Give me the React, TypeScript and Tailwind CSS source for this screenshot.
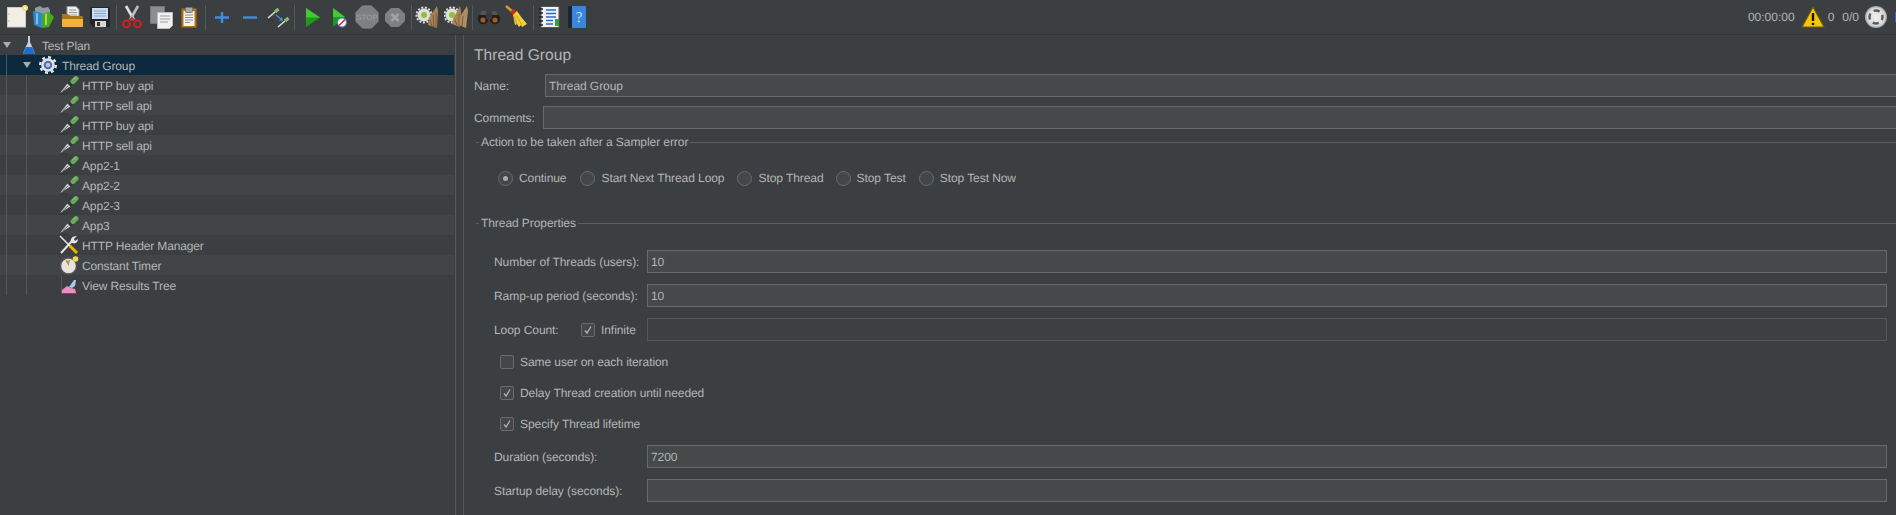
import React from "react";

const font = "font-['Liberation_Sans',Arial,sans-serif] [text-rendering:geometricPrecision]";

const S = ({ children, w = 24, h = 24 }: { children: React.ReactNode; w?: number; h?: number }) => (
  <svg width={w} height={h} viewBox={`0 0 ${w} ${h}`} className="block shrink-0">{children}</svg>
);

const NewI = () => (
  <S>
    <rect x="3.5" y="2.500" width="18" height="19.500" fill="#f1efe6" stroke="#cfcdc2" />
    <circle cx="5" cy="9" r=".7" fill="#999" />
    <circle cx="5" cy="16" r=".7" fill="#999" />
    <circle cx="21" cy="3" r="3" fill="#f3dd70" />
    <circle cx="21" cy="3" r="1.400" fill="#fff9d8" />
  </S>
);
const Templates = () => (
  <S>
    <path d="M4 3l5-2 3 2 5-1 2 3v8H4z" fill="#8f9ca3" />
    <path d="M2 6l9 2v15l-8-3z" fill="#2f87c8" />
    <path d="M5 8l2 .5v11L5 19z" fill="#7cc0ea" />
    <path d="M11 9l7-2 5 5-5 10-7 1z" fill="#48a81e" />
    <path d="M14 9l2-.5v11l-2 1z" fill="#a2d868" />
  </S>
);
const OpenI = () => (
  <S>
    <path d="M7 1.500h9l3 3v8H7z" fill="#eee" stroke="#9a9a9a" />
    <path d="M9 5h7M9 7.500h8M9 10h8" stroke="#999" />
    <path d="M2 9h6l2 2h12a1 1 0 011 1v9a1 1 0 01-1 1H3a1 1 0 01-1-1z" fill="#a97518" />
    <path d="M2 14h21v7a1 1 0 01-1 1H3a1 1 0 01-1-1z" fill="#efb23b" />
  </S>
);
const Save = () => (
  <S>
    <path d="M3 2h18a1 1 0 011 1v19H5l-3-3V3a1 1 0 011-1z" fill="#232528" />
    <rect x="4" y="3" width="16" height="11" fill="#c9ddf2" />
    <path d="M6 6h12M6 8.500h12M6 11h12" stroke="#86a5c9" />
    <rect x="7" y="16" width="11" height="6" fill="#d6d6d6" />
    <rect x="9" y="17" width="3" height="4" fill="#333" />
  </S>
);
const Cut = () => (
  <S>
    <path d="M6 1l8 14" stroke="#e0e0e0" strokeWidth="2.600" />
    <path d="M18 1L10 15" stroke="#bdbdbd" strokeWidth="2.600" />
    <circle cx="6.500" cy="19" r="3.400" fill="none" stroke="#d21f1f" strokeWidth="2" />
    <circle cx="17.500" cy="19" r="3.400" fill="none" stroke="#d21f1f" strokeWidth="2" />
    <path d="M9 16l3-3 3 3" stroke="#b81818" strokeWidth="1.600" fill="none" />
  </S>
);
const Copy = () => (
  <S>
    <rect x="1.500" y="1.500" width="14" height="17" fill="#8d8d8d" stroke="#777" />
    <path d="M8.500 7.500h15v13l-3 3h-12z" fill="#f1f1f1" stroke="#bdbdbd" />
    <path d="M11 11h10M11 14h10M11 17h8" stroke="#9c9c9c" />
  </S>
);
const Paste = () => (
  <S>
    <rect x="4.500" y="3.500" width="15" height="19" rx="1" fill="#b26f16" stroke="#8a5510" />
    <rect x="6.500" y="6" width="11" height="15" fill="#f3f3f3" />
    <rect x="8.500" y="2.500" width="7" height="5" rx="1" fill="#aaa" stroke="#777" />
    <path d="M8 10h8M8 12.500h8M8 15h8M8 17.500h5" stroke="#8d8d8d" />
  </S>
);
const Plus = () => <S><path d="M12 7v11M5 12.500h14" stroke="#3f8fdc" strokeWidth="2.400" /></S>;
const Minus = () => <S><path d="M5 12.500h14" stroke="#3f8fdc" strokeWidth="2.400" /></S>;
const Toggle = () => (
  <S>
    <path d="M2 13l7-6" stroke="#ddd" strokeWidth="1.600" />
    <path d="M9 7l3.500-3" stroke="#86c06a" strokeWidth="3.200" />
    <path d="M2 15h6" stroke="#222" strokeWidth="1" opacity=".6" />
    <path d="M10 10l5 4" stroke="#3f8fdc" strokeWidth="1.500" />
    <path d="M13 15.500l4 .5-1-4z" fill="#3f8fdc" />
    <path d="M12 22l7-6" stroke="#ddd" strokeWidth="1.600" />
    <path d="M19 16l3.500-3" stroke="#86c06a" strokeWidth="3.200" />
  </S>
);
const Play = () => (
  <S>
    <path d="M6 3l14 9.500L6 22z" fill="#1c9a1c" />
    <path d="M6 3l14 9.500H6z" fill="#45c835" />
  </S>
);
const PlayNo = () => (
  <S>
    <path d="M6 3l12 9L6 22z" fill="#1c9a1c" />
    <path d="M6 3l12 9H6z" fill="#45c835" />
    <circle cx="15" cy="17.500" r="4.500" fill="#eef3fb" stroke="#3f7fd0" />
    <path d="M12 20.500l6-6" stroke="#d22" strokeWidth="1.500" />
  </S>
);
const Stop = () => (
  <S>
    <path d="M7.500 1h9L23 7.500v9L16.500 23h-9L1 16.500v-9z" fill="#7d7f81" stroke="#8a8c8e" />
    <text x="12" y="15" textAnchor="middle" fontSize="8" fontWeight="700" fill="#969899" fontFamily="Liberation Sans">STOP</text>
  </S>
);
const Shutdown = () => (
  <S>
    <path d="M8 3h8l6 6v7l-6 6H8l-6-6V9z" fill="#7e8082" />
    <path d="M8.500 9l7 7M15.500 9l-7 7" stroke="#a0a2a4" strokeWidth="2.600" />
  </S>
);
const SmallGear = ({ x, y }: { x: number; y: number }) => (
  <g>
    <circle cx={x} cy={y} r="7.500" fill="none" stroke="#dededa" strokeWidth="2" strokeDasharray="2 1.600" />
    <circle cx={x} cy={y} r="6.500" fill="#dededa" />
    <circle cx={x} cy={y} r="3" fill="#8fc23a" />
  </g>
);
const Clear = () => (
  <S>
    <SmallGear x={9} y={10} />
    <path d="M14 13L22 1l1 5-1 17-9-3z" fill="#a9835a" />
    <path d="M15 15l2 6M18 10l1 12M21 7v15" stroke="#7a5c3c" />
  </S>
);
const ClearAll = () => (
  <S>
    <SmallGear x={8} y={10} />
    <path d="M9 14L16 1l1 6-1 15-8-3z" fill="#a9835a" />
    <path d="M15 13L23 1l1 5-2 17-7-3z" fill="#b08c62" />
    <path d="M11 15l2 5M15 9v12M19 11l-1 10" stroke="#7a5c3c" />
  </S>
);
const Binoc = () => (
  <S>
    <circle cx="6" cy="14" r="5.200" fill="#1f1f1f" />
    <circle cx="18" cy="14" r="5.200" fill="#1f1f1f" />
    <rect x="9" y="9" width="6" height="5" fill="#3a3a3a" />
    <path d="M3 10l2-4h4v4zM21 10l-2-4h-4v4z" fill="#555" />
    <circle cx="6" cy="15" r="2.600" fill="#a8581f" />
    <circle cx="18" cy="15" r="2.600" fill="#a8581f" />
  </S>
);
const Broom = () => (
  <S>
    <path d="M2 1l7 6" stroke="#c79a2e" strokeWidth="2.600" />
    <path d="M6 7l4-3 3 3-3 4z" fill="#cf2a1e" />
    <path d="M9 10l4-4c3 5 7 9 10 13l-5 3-1-2-2 2-2-3-2 1z" fill="#f2cf3b" />
    <path d="M12 10l6 10M10 11l3 8" stroke="#c9a21f" />
  </S>
);
const ListI = () => (
  <S>
    <rect x="4" y="1.500" width="18" height="21" fill="#f2f2f2" stroke="#555" />
    <path d="M9 5h10M9 8.500h10M9 12h10M9 15.500h7M9 19h7" stroke="#1f6fd6" strokeWidth="1.500" />
    <path d="M2 4h4M2 8h4M2 12h4M2 16h4M2 20h4" stroke="#222" strokeWidth="1.500" />
    <rect x="18" y="14" width="4" height="7" fill="#3aa13a" />
  </S>
);
const Help = () => (
  <S>
    <rect x="3" y="1" width="18" height="22" rx="1" fill="#3a86dd" />
    <rect x="3" y="1" width="4" height="22" fill="#1c2533" />
    <text x="14" y="17" textAnchor="middle" fontSize="15" fill="#cfe4fb" fontFamily="Liberation Serif">?</text>
  </S>
);
const Warn = () => (
  <S>
    <path d="M12 2L23 22H1z" fill="#f4c700" stroke="#6b5a10" strokeWidth="1.200" />
    <path d="M12 8v8" stroke="#111" strokeWidth="2.400" />
    <circle cx="12" cy="19" r="1.300" fill="#111" />
  </S>
);
const Loggers = () => (
  <S>
    <defs>
      <radialGradient id="lg">
        <stop offset="0" stopColor="#f0f0f0" />
        <stop offset=".8" stopColor="#d8d8d8" />
        <stop offset="1" stopColor="#9a9a9a" />
      </radialGradient>
    </defs>
    <circle cx="12" cy="12" r="11" fill="url(#lg)" />
    <circle cx="12" cy="12" r="6.500" fill="none" stroke="#5a5a5a" strokeWidth="2.400" strokeDasharray="6.200 4" strokeDashoffset="3.100" />
  </S>
);

const Flask = () => (
  <S w={12} h={20}>
    <path d="M5 1h2v6l4.500 10c.5 1 0 2-1 2h-9c-1 0-1.500-1-1-2L5 7z" fill="#ccd0d6" />
    <path d="M3 12h6l2.500 5c.5 1 0 2-1 2h-9c-1 0-1.500-1-1-2z" fill="#1e6fd0" />
  </S>
);
const TreeGear = () => (
  <S w={18} h={18}>
    <circle cx="9" cy="9" r="7.800" fill="none" stroke="#e6e6e6" strokeWidth="2.400" strokeDasharray="3 3.100" />
    <circle cx="9" cy="9" r="6.800" fill="#e6e6e6" />
    <circle cx="9" cy="9" r="4.300" fill="#4f6db3" />
    <circle cx="9" cy="9" r="2.300" fill="#b7c4e4" />
  </S>
);
const Dropper = () => (
  <S w={20} h={20}>
    <g transform="translate(0 .6)">
      <path d="M1 18.500h8" stroke="#222" strokeWidth="1" opacity=".55" />
      <path d="M1 17.500L8.500 8l3 3z" fill="#cfd2d0" />
      <path d="M3.500 15.500l6-5.500" stroke="#6a6d6f" strokeWidth="1" />
      <path d="M10.500 9.500L13 7" stroke="#303335" strokeWidth="4.500" />
      <path d="M14 6l3-3" stroke="#69aa5a" strokeWidth="5" strokeLinecap="round" />
      <path d="M14.500 4l2.500-2.500" stroke="#a4d48f" strokeWidth="1" />
    </g>
  </S>
);
const Tools = () => (
  <S w={20} h={20}>
    <path d="M1 1l11 11" stroke="#e5e5e5" strokeWidth="1.500" />
    <path d="M11 11l7 7" stroke="#f0b400" strokeWidth="3" />
    <path d="M2 18L13 6" stroke="#e5e5e5" strokeWidth="2" />
    <path d="M12 7c-1-3 1-6 6-6l-3 3 1 2 3-2c0 4-4 6-7 3z" fill="#e5e5e5" />
  </S>
);
const Timer = () => (
  <S w={20} h={20}>
    <circle cx="9.500" cy="11" r="8" fill="#e9e4d8" stroke="#57535f" strokeWidth="1.500" />
    <path d="M9.500 11L6 5l2 .5L11 5z" fill="#b59a4a" />
    <circle cx="16.500" cy="4" r="2.800" fill="#f1d94a" />
  </S>
);
const Results = () => (
  <S w={20} h={20}>
    <path d="M2.500 1v17.500H18" fill="none" stroke="#55585a" strokeWidth="1" />
    <path d="M3 18v-3l5-4 4 2 4 1 1 4z" fill="#ee8fc4" />
    <path d="M10 12l5-7h2l-1 6-3 2z" fill="#a9c9ee" />
  </S>
);

const tools: [string, React.FC | null][] = [
  ["ml-0", NewI], ["ml-[3px]", Templates], ["ml-[5px]", OpenI], ["ml-1", Save], ["ml-1", null],
  ["ml-[3px]", Cut], ["ml-[5px]", Copy], ["ml-1", Paste], ["ml-1", null],
  ["ml-1", Plus], ["ml-1", Minus], ["ml-1", Toggle], ["ml-1", null],
  ["ml-[5px]", Play], ["ml-[3px]", PlayNo], ["ml-1", Stop], ["ml-1", Shutdown], ["ml-1", null],
  ["ml-[3px]", Clear], ["ml-[5px]", ClearAll], ["ml-1", null],
  ["ml-1", Binoc], ["ml-[3px]", Broom], ["ml-[5px]", null],
  ["ml-[3px]", ListI], ["ml-1", Help],
];

const Toolbar = () => (
  <div className="flex h-[35px] shrink-0 items-center border-b border-[#323537] pl-1 text-[12px] text-[#b4b6b8]">
    {tools.map(([m, I], i) =>
      I ? (
        <div key={i} className={m}><I /></div>
      ) : (
        <div key={i} className={`${m} h-[25px] w-px bg-[#55585a]`} />
      )
    )}
    <span className="ml-auto">00:00:00</span>
    <div className="ml-[6px]"><Warn /></div>
    <span className="ml-[3px]">0</span>
    <span className="ml-[8px]">0/0</span>
    <div className="ml-[5px]"><Loggers /></div>
    <span className="ml-[7px] h-[10px] w-px bg-[#3a66c8]" />
  </div>
);

type Row = { label: string; icon: React.FC };
const children: Row[] = [
  { label: "HTTP buy api", icon: Dropper },
  { label: "HTTP sell api", icon: Dropper },
  { label: "HTTP buy api", icon: Dropper },
  { label: "HTTP sell api", icon: Dropper },
  { label: "App2-1", icon: Dropper },
  { label: "App2-2", icon: Dropper },
  { label: "App2-3", icon: Dropper },
  { label: "App3", icon: Dropper },
  { label: "HTTP Header Manager", icon: Tools },
  { label: "Constant Timer", icon: Timer },
  { label: "View Results Tree", icon: Results },
];

const Arrow = () => <span className="block h-0 w-0 border-x-[4px] border-t-[6px] border-x-transparent border-t-[#a9abad]" />;

const Tree = () => (
  <div className="w-[456px] shrink-0 border-r border-[#55585a] text-[12px] tracking-[-0.15px] text-[#b4b6b8]">
    <div className="flex h-5 w-[454px] items-center">
      <span className="ml-[3px]"><Arrow /></span>
      <span className="ml-[12px]"><Flask /></span>
      <span className="ml-[7px] pt-[2px]">Test Plan</span>
    </div>
    <div className="flex h-5 w-[454px] items-center bg-[#0d293e]">
      <span className="ml-[6px] h-full w-px bg-[#55585a]" />
      <span className="ml-[16px]"><Arrow /></span>
      <span className="ml-[8px]"><TreeGear /></span>
      <span className="ml-[5px] pt-[2px]">Thread Group</span>
    </div>
    {children.map((r, i) => (
      <div key={i} className={`flex h-5 w-[454px] items-center ${i % 2 ? "bg-[#424548]" : ""}`}>
        <span className="ml-[6px] h-full w-px bg-[#55585a]" />
        <span className="ml-[19px] h-full w-px bg-[#55585a]" />
        <span className="ml-[32px]"><r.icon /></span>
        <span className="ml-[3px] pt-[2px]">{r.label}</span>
      </div>
    ))}
  </div>
);

const Input = ({ value, className = "", dim }: { value?: string; className?: string; dim?: boolean }) => (
  <div className={`flex h-[23px] min-w-0 flex-1 items-center border px-[3px] ${dim ? "border-[#55585a] bg-[#3e4143]" : "border-[#686b6d] bg-[#45494a]"} ${className}`}>
    {value}
  </div>
);

const Legend = ({ title, className }: { title: string; className: string }) => (
  <div className={`flex h-4 items-center ${className}`}>
    <span className="ml-[2px] h-px w-[3px] bg-[#5c5f61]" />
    <span className="mx-[2px]">{title}</span>
    <span className="h-px flex-1 bg-[#5c5f61]" />
  </div>
);

const Radio = ({ label, on, className = "" }: { label: string; on?: boolean; className?: string }) => (
  <div className={`flex items-center ${className}`}>
    <span className="flex h-[15px] w-[15px] items-center justify-center rounded-full border border-[#696c6e] bg-[#43474a]">
      {on && <span className="h-[5px] w-[5px] rounded-full bg-[#a9abad]" />}
    </span>
    <span className="ml-[6px]">{label}</span>
  </div>
);

const Check = ({ on }: { on?: boolean }) => (
  <span className="flex h-[14px] w-[14px] shrink-0 items-center justify-center rounded-[2px] border border-[#696c6e] bg-[#43474a]">
    {on && (
      <svg width="10" height="10" viewBox="0 0 10 10">
        <path d="M2 5.500L4 8l4-6.500" fill="none" stroke="#b0b2b4" strokeWidth="1.300" />
      </svg>
    )}
  </span>
);

const CheckRow = ({ label, on, className }: { label: string; on?: boolean; className: string }) => (
  <div className={`flex h-4 items-center pl-[26px] ${className}`}>
    <Check on={on} />
    <span className="ml-[6px]">{label}</span>
  </div>
);

const Field = ({ label, value, className, dim }: { label: string; value?: string; className: string; dim?: boolean }) => (
  <div className={`flex items-center pl-[20px] pr-[9px] ${className}`}>
    <span className="w-[153px] shrink-0">{label}</span>
    <Input value={value} dim={dim} />
  </div>
);

const Form = () => (
  <div className="ml-[7px] min-w-0 flex-1 border-l border-[#55585a] pl-[10px] text-[12px] tracking-[-0.07px] text-[#b4b6b8]">
    <div className="mt-[11px] text-[15.6px] leading-5 tracking-normal">Thread Group</div>
    <div className="mt-2 flex items-center">
      <span className="w-[71px] shrink-0">Name:</span>
      <Input value="Thread Group" className="-mr-px" />
    </div>
    <div className="mt-[9px] flex items-center">
      <span className="w-[69px] shrink-0">Comments:</span>
      <Input className="-mr-px" />
    </div>
    <Legend title="Action to be taken after a Sampler error" className="mt-[5px]" />
    <div className="mt-5 flex h-4 items-center pl-[24px]">
      <Radio label="Continue" on />
      <Radio label="Start Next Thread Loop" className="ml-[14px]" />
      <Radio label="Stop Thread" className="ml-[13px]" />
      <Radio label="Stop Test" className="ml-[12px]" />
      <Radio label="Stop Test Now" className="ml-[13px]" />
    </div>
    <Legend title="Thread Properties" className="mt-[29px]" />
    <Field label="Number of Threads (users):" value="10" className="mt-[19px]" />
    <Field label="Ramp-up period (seconds):" value="10" className="mt-[11px]" />
    <div className="mt-[11px] flex items-center pl-[20px] pr-[9px]">
      <span className="w-[87px] shrink-0">Loop Count:</span>
      <Check on />
      <span className="ml-[6px] w-[46px] shrink-0">Infinite</span>
      <Input dim />
    </div>
    <CheckRow label="Same user on each iteration" className="mt-[13px]" />
    <CheckRow label="Delay Thread creation until needed" on className="mt-[15px]" />
    <CheckRow label="Specify Thread lifetime" on className="mt-[15px]" />
    <Field label="Duration (seconds):" value="7200" className="mt-[13px]" />
    <Field label="Startup delay (seconds):" className="mt-[11px]" />
  </div>
);

export default function App() {
  return (
    <div className={`flex h-[515px] w-[1896px] flex-col overflow-hidden bg-[#3c3f41] ${font}`}>
      <Toolbar />
      <div className="flex min-h-0 flex-1">
        <Tree />
        <Form />
      </div>
    </div>
  );
}
